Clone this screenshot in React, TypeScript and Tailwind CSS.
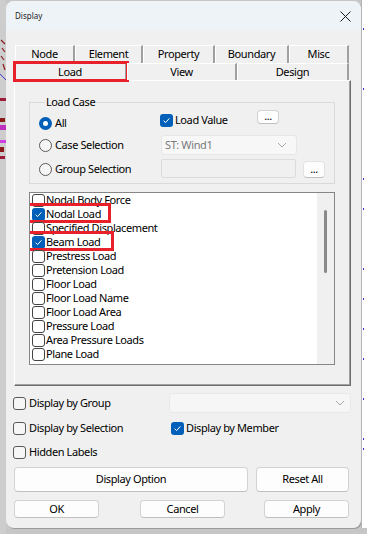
import React from 'react';

const FONT = "font-['Noto_Sans',sans-serif] tracking-[-0.4px]";

function Check({ on, list }: { on?: boolean; list?: boolean }) {
  if (on) {
    return (
      <span className="w-[13px] h-[13px] rounded-[3px] bg-[#005fb8] flex items-center justify-center shrink-0">
        <svg width="9" height="9" viewBox="0 0 9 9">
          <path d="M1.6 4.7 L3.6 6.6 L7.4 2.3" stroke="#fff" strokeWidth="1" fill="none" />
        </svg>
      </span>
    );
  }
  return (
    <span
      className={`w-[13px] h-[13px] rounded-[3px] border shrink-0 ${
        list ? 'border-[#444] bg-white' : 'border-[#5a5a5a] bg-[#f6f6f6]'
      }`}
    />
  );
}

function Radio({ on }: { on?: boolean }) {
  if (on) {
    return (
      <span className="w-[13px] h-[13px] rounded-full bg-[#005fb8] flex items-center justify-center shrink-0">
        <span className="w-[5px] h-[5px] rounded-full bg-white" />
      </span>
    );
  }
  return <span className="w-[13px] h-[13px] rounded-full border border-[#5a5a5a] bg-[#f6f6f6] shrink-0" />;
}

function Chevron() {
  return (
    <svg width="10" height="6" viewBox="0 0 10 6">
      <path d="M1 1 L5 5 L9 1" stroke="#a8a8a8" strokeWidth="1" fill="none" />
    </svg>
  );
}

function Btn({ label, className }: { label: string; className: string }) {
  return (
    <button
      className={`bg-[#fdfdfd] border border-[#d2d2d2] border-b-[#c0c0c0] rounded-[4px] text-[11px] text-black flex items-center justify-center ${className}`}
    >
      {label}
    </button>
  );
}

const ROW1 = [
  { label: 'Node', w: 'w-[60px]' },
  { label: 'Element', w: 'w-[68px]' },
  { label: 'Property', w: 'w-[72px]' },
  { label: 'Boundary', w: 'w-[74px]' },
  { label: 'Misc', w: 'w-[60px]' },
];

const ROW2 = [
  { label: 'Load', w: 'w-[113px]' },
  { label: 'View', w: 'w-[110px]' },
  { label: 'Design', w: 'w-[112px]' },
];

const ITEMS = [
  { label: 'Nodal Body Force' },
  { label: 'Nodal Load', on: true, mark: true },
  { label: 'Specified Displacement' },
  { label: 'Beam Load', on: true, mark: true },
  { label: 'Prestress Load' },
  { label: 'Pretension Load' },
  { label: 'Floor Load' },
  { label: 'Floor Load Name' },
  { label: 'Floor Load Area' },
  { label: 'Pressure Load' },
  { label: 'Area Pressure Loads' },
  { label: 'Plane Load' },
];

export default function App() {
  return (
    <div className={`w-[367px] h-[534px] flex bg-[#c6c6c6] overflow-hidden ${FONT} text-black`}>
      {/* background CAD view, left */}
      <div className="w-[6px] h-full bg-[#cdcdcd] shrink-0">
        <svg width="6" height="534" viewBox="0 0 6 534">
          <path d="M1 40 L5 44 M2 48 L5 52 M1 56 L4 60 M3 64 L5 70" stroke="#8b1a1a" strokeWidth="1.2" />
          <path d="M0 74 L6 80" stroke="#3a3ad0" strokeWidth="1" />
          <rect x="0" y="98" width="6" height="3" fill="#9b1d3a" />
          <rect x="0" y="118" width="5" height="4" fill="#8b1a1a" />
          <rect x="0" y="125" width="6" height="5" fill="#c030c0" />
          <rect x="0" y="140" width="6" height="3" fill="#d040e0" />
          <rect x="0" y="147" width="4" height="5" fill="#8b1a1a" />
          <rect x="0" y="156" width="5" height="3" fill="#9b1d3a" />
        </svg>
      </div>

      {/* dialog */}
      <div className="w-[355px] h-[527px] mt-[1px] rounded-[8px] bg-[#f0f0f0] shrink-0 flex flex-col overflow-hidden shadow-[1px_1px_0_#9a9a9a]">
        {/* title bar */}
        <div className="h-[30px] bg-[#eef3f8] flex items-center justify-between pl-[9px] pr-[10px] shrink-0">
          <span className="text-[8px] text-[#222] tracking-normal">Display</span>
          <svg width="11" height="11" viewBox="0 0 11 11">
            <path d="M0.5 0.5 L10.5 10.5 M10.5 0.5 L0.5 10.5" stroke="#1a1a1a" strokeWidth="1" />
          </svg>
        </div>

        <div className="pl-[8px] flex flex-col">
          {/* tabs */}
          <div className="mt-[14px] flex flex-col">
            <div className="flex h-[18px] pl-[1px]">
              {ROW1.map((t) => (
                <div
                  key={t.label}
                  className={`${t.w} h-full border-t border-l border-white border-r-2 border-r-[#a0a0a0] flex items-center justify-center text-[11px] bg-[#f0f0f0]`}
                >
                  {t.label}
                </div>
              ))}
            </div>
            <div className="flex h-[17px]">
              {ROW2.map((t, i) => (
                <div
                  key={t.label}
                  className={`${t.w} h-full border-t border-l border-white border-r-2 border-r-[#a0a0a0] flex items-center justify-center text-[11px] bg-[#f0f0f0] relative`}
                >
                  {t.label}
                  {i === 0 && (
                    <span className="absolute left-[-2px] top-[-3px] w-[116px] h-[21px] border-[3px] border-[#e8202a]" />
                  )}
                </div>
              ))}
            </div>
          </div>

          {/* tab panel */}
          <div className="w-[337px] h-[306px] border border-white border-r-[#6e6e6e] border-b-[#6e6e6e] shadow-[inset_-1px_-1px_0_#a0a0a0] pl-[14px] flex flex-col">
            <fieldset className="mt-[14px] w-[306px] border border-[#dadada] pl-[9px] pb-[4px]">
              <legend className="ml-[6px] px-[1px] text-[11px] leading-[14px]">Load Case</legend>
              <div className="flex items-start h-[16px] mt-[1px]">
                <div className="w-[121px] flex items-center gap-[3px] mt-[5px] text-[11px]">
                  <Radio on />
                  <span>All</span>
                </div>
                <div className="w-[97px] flex items-center gap-[2px] mt-[2px] text-[11px]">
                  <Check on />
                  <span>Load Value</span>
                </div>
                <Btn label="..." className="w-[22px] h-[14px] leading-none pb-[3px]" />
              </div>
              <div className="flex items-center h-[20px] mt-[9px]">
                <div className="w-[122px] flex items-center gap-[3px] text-[11px]">
                  <Radio />
                  <span>Case Selection</span>
                </div>
                <div className="w-[136px] h-full bg-[#f7f7f7] border border-[#e6e6e6] rounded-[3px] flex items-center justify-between pl-[3px] pr-[9px] text-[11px] text-[#7a7a7a]">
                  <span>ST: Wind1</span>
                  <Chevron />
                </div>
              </div>
              <div className="flex items-start h-[20px] mt-[4px]">
                <div className="w-[122px] h-full flex items-center gap-[3px] text-[11px]">
                  <Radio />
                  <span>Group Selection</span>
                </div>
                <div className="w-[135px] h-[19px] bg-[#f0f0f0] border border-[#dcdcdc] rounded-[2px]" />
                <Btn label="..." className="ml-[7px] mt-[2px] w-[22px] h-[17px] text-[#888] border-[#e2e2e2] bg-[#f6f6f6]" />
              </div>
            </fieldset>

            {/* list */}
            <div className="mt-[8px] w-[306px] h-[173px] border border-[#868686] bg-white flex overflow-hidden">
              <div className="flex-1 flex flex-col pl-[2px]">
                {ITEMS.map((it) => (
                  <div key={it.label} className="h-[14px] flex items-center gap-[1px] text-[11px] relative shrink-0">
                    <Check on={it.on} list />
                    <span>{it.label}</span>
                    {it.mark && (
                      <span
                        className={`absolute left-[-13px] top-[-4px] h-[20px] border-[3px] border-[#e8202a] ${
                          it.label === 'Nodal Load' ? 'w-[92px]' : 'w-[95px]'
                        }`}
                      />
                    )}
                  </div>
                ))}
              </div>
              <div className="w-[17px] h-full bg-[#f0f0f0] flex justify-center">
                <span className="mt-[17px] w-[3px] h-[63px] rounded-full bg-[#8a8a8a]" />
              </div>
            </div>
          </div>

          {/* bottom options */}
          <div className="mt-[7px] h-[20px] flex items-center">
            <div className="w-[156px] -ml-[1px] flex items-center gap-[3px] text-[11px]">
              <Check />
              <span>Display by Group</span>
            </div>
            <div className="w-[182px] h-full bg-[#f6f6f6] border border-[#e8e8e8] rounded-[3px] flex items-center justify-end pr-[5px]">
              <Chevron />
            </div>
          </div>
          <div className="mt-[5px] h-[20px] flex items-center">
            <div className="w-[158px] -ml-[1px] flex items-center gap-[3px] text-[11px]">
              <Check />
              <span>Display by Selection</span>
            </div>
            <div className="flex items-center gap-[2px] text-[11px]">
              <Check on />
              <span>Display by Member</span>
            </div>
          </div>
          <div className="mt-[4px] h-[20px] flex items-center">
            <div className="-ml-[1px] flex items-center gap-[3px] text-[11px]">
              <Check />
              <span>Hidden Labels</span>
            </div>
          </div>

          <div className="mt-[5px] flex gap-[8px]">
            <Btn label="Display Option" className="w-[234px] h-[25px]" />
            <Btn label="Reset All" className="w-[93px] h-[25px]" />
          </div>
          <div className="mt-[8px] flex">
            <Btn label="OK" className="w-[85px] h-[18px]" />
            <Btn label="Cancel" className="ml-[41px] w-[85px] h-[18px]" />
            <Btn label="Apply" className="ml-[39px] w-[85px] h-[18px]" />
          </div>
        </div>
      </div>

      {/* background CAD view, right */}
      <div className="w-[6px] h-[528px] bg-white shrink-0 border-l border-[#b4b4b4]">
        <svg width="5" height="528" viewBox="0 0 5 528">
          {[28, 88, 178, 208, 268, 298, 328, 358, 398, 438, 448].map((y) => (
            <rect key={y} x="1" y={y} width="1" height="2" fill="#3030c0" />
          ))}
        </svg>
      </div>
    </div>
  );
}
